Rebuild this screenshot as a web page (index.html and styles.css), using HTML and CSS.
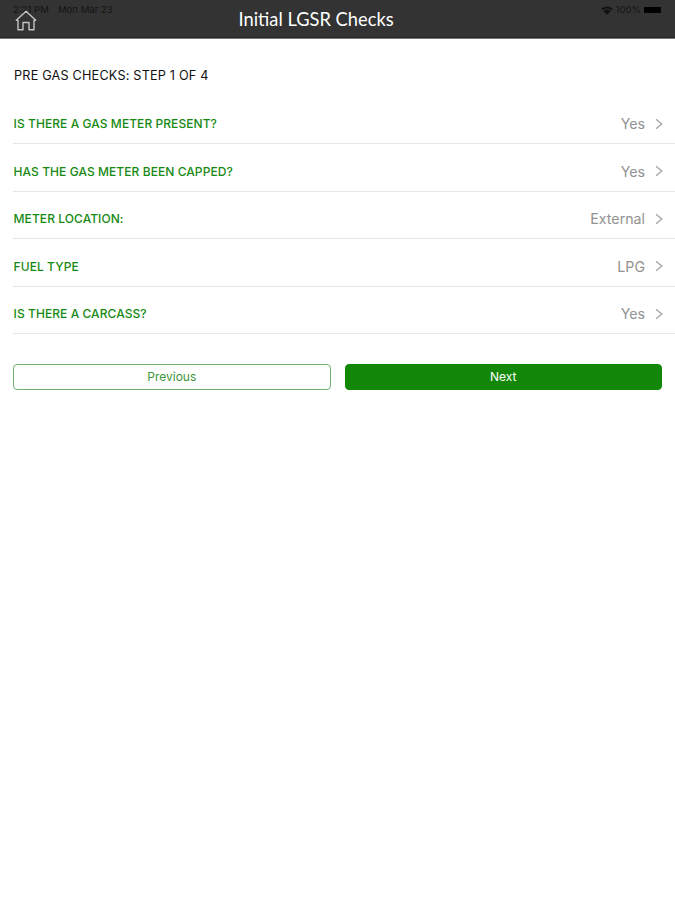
FILE: index.html
```html
<!DOCTYPE html>
<html lang="en">
<head>
<meta charset="utf-8">
<title>Initial LGSR Checks</title>
<link rel="stylesheet" href="styles.css">
</head>
<body>
<header class="navbar">
  <div class="status status-left"><span>2:21 PM</span><span>Mon Mar 23</span></div>
  <svg class="home" viewBox="0 0 22 22" fill="none" stroke="#c4c4c4" stroke-width="1.4" stroke-linejoin="round"><path d="M1.3 10.2 11 1.2l9.7 9H19v9.6h-5V12.5H8v7.3H3v-9.6Z"/></svg>
  <h1 class="title">Initial LGSR Checks</h1>
  <div class="status status-right">
    <svg class="wifi" viewBox="0 0 12 9" fill="#111"><path d="M.3 2.9a8.2 8.2 0 0 1 11.4 0l-1.3 1.4a6.3 6.3 0 0 0-8.8 0ZM2.3 5a5.3 5.3 0 0 1 7.4 0L6 8.8Z"/></svg>
    <span>100%</span><i class="battery"></i>
  </div>
</header>
<main>
  <h2 class="step">PRE GAS CHECKS: STEP 1 OF 4</h2>
  <ul class="list">
    <li class="row"><span class="label">IS THERE A GAS METER PRESENT?</span><span class="value">Yes</span><svg class="chev" viewBox="0 0 8 12"><path d="m1 1.2 5.8 4.8L1 10.8"/></svg></li>
    <li class="row"><span class="label">HAS THE GAS METER BEEN CAPPED?</span><span class="value">Yes</span><svg class="chev" viewBox="0 0 8 12"><path d="m1 1.2 5.8 4.8L1 10.8"/></svg></li>
    <li class="row"><span class="label">METER LOCATION:</span><span class="value">External</span><svg class="chev" viewBox="0 0 8 12"><path d="m1 1.2 5.8 4.8L1 10.8"/></svg></li>
    <li class="row"><span class="label">FUEL TYPE</span><span class="value">LPG</span><svg class="chev" viewBox="0 0 8 12"><path d="m1 1.2 5.8 4.8L1 10.8"/></svg></li>
    <li class="row"><span class="label">IS THERE A CARCASS?</span><span class="value">Yes</span><svg class="chev" viewBox="0 0 8 12"><path d="m1 1.2 5.8 4.8L1 10.8"/></svg></li>
  </ul>
  <div class="actions">
    <button class="btn">Previous</button>
    <button class="btn primary">Next</button>
  </div>
</main>
</body>
</html>
```
FILE: styles.css
```css
* { box-sizing: border-box; }
body {
  margin: 0;
  min-height: 900px;
  background: #fff;
  font-family: Inter, "Liberation Sans", sans-serif;
}
.navbar {
  position: relative;
  height: 39px;
  background: #333;
  border-bottom: 1px solid #777;
  box-shadow: inset 0 -1px #292929;
}
.title {
  margin: 0;
  padding: 8px 0 0 238.5px;
  font: 400 18.3px/23px Lato, sans-serif;
  color: #fff;
  white-space: nowrap;
}
.status {
  position: absolute;
  top: 4px;
  display: flex;
  align-items: center;
  font-size: 9.6px;
  line-height: 12px;
  color: #141414;
  white-space: nowrap;
}
.status-left { left: 13px; gap: 9px; }
.status-right { right: 14px; gap: 3px; }
.wifi { width: 12px; height: 9px; }
.battery { width: 17px; height: 6px; border-radius: 1px; background: #000; }
.home { position: absolute; left: 15px; top: 10px; width: 22px; height: 22px; z-index: 1; }
.step {
  margin: 0;
  padding: 28px 0 0 14px;
  font-size: 12.7px;
  line-height: 18px;
  font-weight: 400;
  letter-spacing: .18px;
  color: #111;
}
.list {
  list-style: none;
  margin: 11.5px 0 0 13px;
  padding: 0;
}
.row {
  display: flex;
  align-items: center;
  height: 47.5px;
  padding: 8px 12px 0 .6px;
  border-bottom: 1px solid #e6e6e6;
}
.label { flex: 1; font-size: 12px; line-height: 15px; font-weight: 500; letter-spacing: .07px; color: #168a12; white-space: nowrap; }
.value { font-size: 14.2px; line-height: 17px; color: #929292; }
.chev { width: 8px; height: 12px; margin-left: 10px; fill: none; stroke: #a4a4a4; stroke-width: 1.3; }
.actions {
  display: grid;
  grid-template-columns: 1fr 1fr;
  gap: 14px;
  margin: 30px 13px 0;
}
.btn {
  height: 26px;
  padding: 0;
  border: 1px solid #70b06e;
  border-radius: 4px;
  background: #fff;
  font: 400 12px/16px Inter, sans-serif;
  color: #3d963a;
}
.primary { border-color: #138808; background: #138808; color: #fff; }
```
